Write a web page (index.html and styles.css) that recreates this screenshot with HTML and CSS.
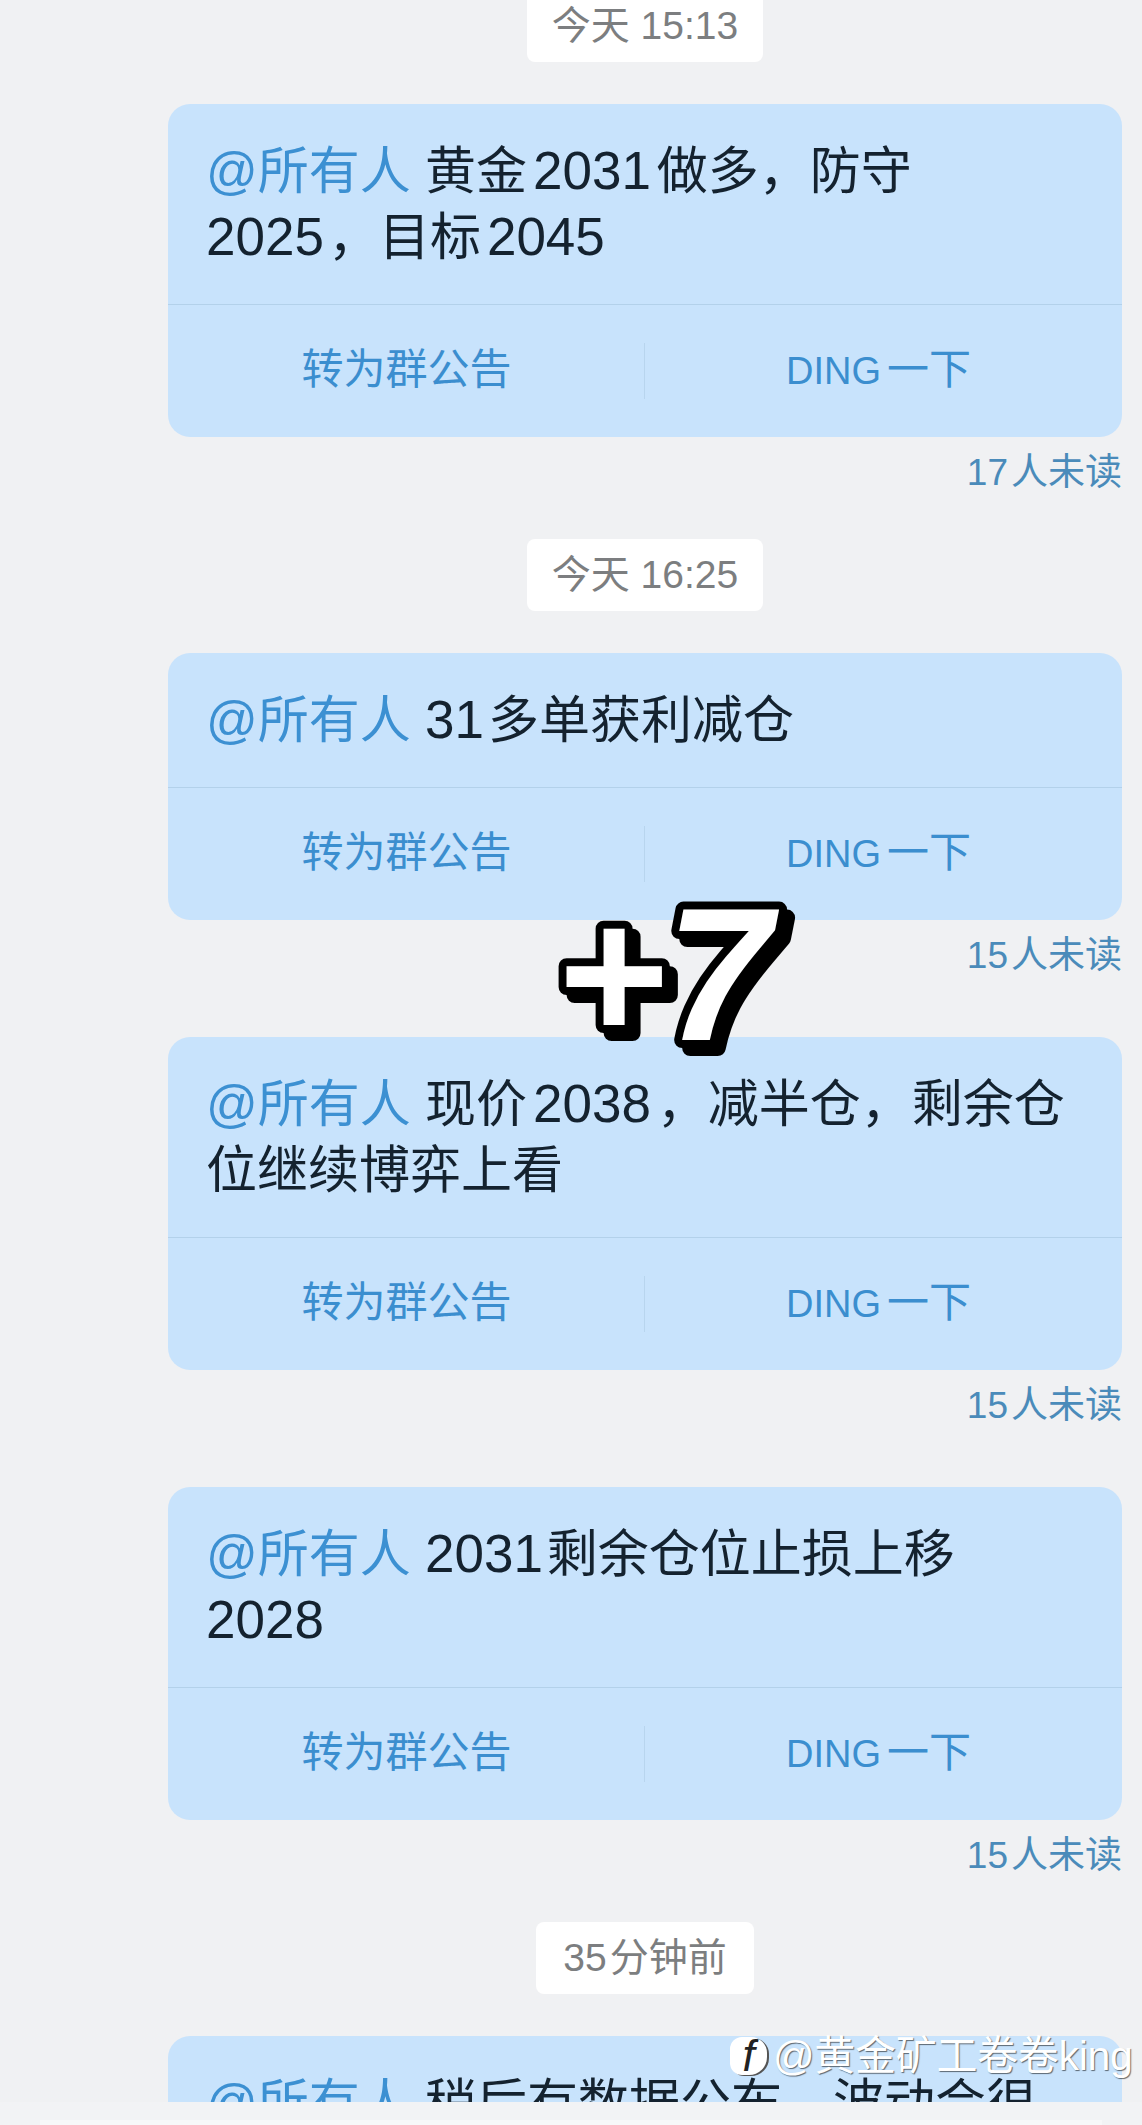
FILE: index.html
```html
<!DOCTYPE html>
<html lang="zh-CN">

<head>
    <meta charset="UTF-8">
    <meta name="viewport" content="width=device-width, initial-scale=1.0">
    <title>群消息</title>
    <link rel="stylesheet" href="styles.css">
</head>

<body>
    <div class="chat">
        <div class="time-row first"><span class="time">今天 15:13</span></div>

        <div class="msg">
            <div class="card">
                <p class="card-text"><span class="mention">@所有人</span> 黄金<span class="num">2031</span>做多，防守<br><span class="num-start">2025</span>，目标<span class="num">2045</span></p>
                <div class="actions">
                    <div class="action">转为群公告</div>
                    <div class="action-sep"></div>
                    <div class="action right"><span class="ding">DING</span>一下</div>
                </div>
            </div>
            <div class="unread">17<span class="one">人未读</span></div>
        </div>

        <div class="time-row"><span class="time">今天 16:25</span></div>

        <div class="msg">
            <div class="card">
                <p class="card-text"><span class="mention">@所有人</span> <span class="num-start">31</span>多单获利减仓</p>
                <div class="actions">
                    <div class="action">转为群公告</div>
                    <div class="action-sep"></div>
                    <div class="action right"><span class="ding">DING</span>一下</div>
                </div>
            </div>
            <div class="unread">15<span class="one">人未读</span></div>
        </div>

        <div class="msg next">
            <div class="card">
                <p class="card-text"><span class="mention">@所有人</span> 现价<span class="num">2038</span>，减半仓，剩余仓<br>位继续博弈上看</p>
                <div class="actions">
                    <div class="action">转为群公告</div>
                    <div class="action-sep"></div>
                    <div class="action right"><span class="ding">DING</span>一下</div>
                </div>
            </div>
            <div class="unread">15<span class="one">人未读</span></div>
        </div>

        <div class="msg next">
            <div class="card">
                <p class="card-text"><span class="mention">@所有人</span> <span class="num-start">2031</span>剩余仓位止损上移<br><span class="num-start">2028</span></p>
                <div class="actions">
                    <div class="action">转为群公告</div>
                    <div class="action-sep"></div>
                    <div class="action right"><span class="ding">DING</span>一下</div>
                </div>
            </div>
            <div class="unread">15<span class="one">人未读</span></div>
        </div>

        <div class="time-row"><span class="time short">35<span class="one">分钟前</span></span></div>

        <div class="msg">
            <div class="card">
                <p class="card-text"><span class="mention">@所有人</span> 稍后有数据公布，波动会很</p>
            </div>
        </div>
    </div>

    <div class="footer"><div class="footer-strip"></div></div>

    <svg class="sticker" width="270" height="200" viewBox="0 0 270 200">
        <text class="sticker-text" x="15" y="160">+7</text>
    </svg>

    <div class="watermark">
        <span class="wm-logo">f</span>
        <span class="wm-text">@黄金矿工卷卷king</span>
    </div>
</body>

</html>
```

FILE: styles.css
```css
* {
    box-sizing: border-box;
}

html,
body {
    margin: 0;
    padding: 0;
}

body {
    position: relative;
    height: 2125px;
    overflow: hidden;
    background-color: #f0f1f3;
    font-family: "Liberation Sans", "Noto Sans CJK SC", sans-serif;
}

.chat {
    height: 2102px;
    overflow: hidden;
    padding: 0 20px 0 168px;
}

.time-row {
    display: flex;
    justify-content: center;
    margin: 44px 0 42px;
}

.time-row.first {
    margin-top: -10px;
}

.time {
    height: 72px;
    line-height: 72px;
    padding: 0 25px;
    font-size: 39px;
    color: #7c7e80;
    background-color: white;
    border-radius: 8px;
}

.time.short {
    padding: 0 27px;
}

.msg.next {
    margin-top: 59px;
}

.card {
    background-color: #c8e3fc;
    border-radius: 22px;
}

.card-text {
    margin: 0;
    padding: 35px 30px 33px 38px;
    font-size: 51px;
    line-height: 66px;
    color: #14222f;
}

.mention {
    color: #3c90d2;
}

.num {
    margin: 0 6px;
    font-size: 53px;
    line-height: 1;
}

.num-start {
    margin-right: 4px;
    font-size: 53px;
    line-height: 1;
}

.actions {
    display: flex;
    align-items: center;
    height: 133px;
    padding-bottom: 12px;
    border-top: 1px solid #b3d1ea;
}

.action {
    flex: none;
    width: 50%;
    text-align: center;
    font-size: 42px;
    color: #3b8ecf;
}

.action.right {
    padding-right: 10px;
}

.ding {
    margin-right: 6px;
    font-size: 38px;
}

.action-sep {
    flex: none;
    width: 1px;
    height: 56px;
    margin-top: 12px;
    margin-left: -1px;
    background-color: #b8d5ee;
}

.one {
    margin-left: 3px;
}

.unread {
    height: 58px;
    padding-top: 14px;
    line-height: 44px;
    text-align: right;
    font-size: 37px;
    color: #4a8bba;
}

.footer {
    height: 23px;
    padding: 18px 40px 0;
    background-color: #f2f3f5;
}

.footer-strip {
    height: 5px;
    background-color: #f7f8f9;
}

.sticker {
    position: absolute;
    left: 540px;
    top: 880px;
    overflow: visible;
    filter: drop-shadow(8px 8px 0 black);
}

.sticker-text {
    font-size: 190px;
    font-weight: bold;
    font-style: italic;
    fill: white;
    stroke: black;
    stroke-width: 16px;
    stroke-linejoin: round;
    paint-order: stroke fill;
}

.watermark {
    position: absolute;
    left: 730px;
    top: 2034px;
    display: flex;
    align-items: center;
    gap: 6px;
    white-space: nowrap;
}

.wm-logo {
    display: flex;
    align-items: center;
    justify-content: center;
    width: 37px;
    height: 38px;
    font-size: 44px;
    font-style: italic;
    color: #222;
    background-color: white;
    border-radius: 12px 16px 18px 12px;
    box-shadow: 2px 1px 0 #555;
}

.wm-text {
    font-size: 41px;
    line-height: 44px;
    letter-spacing: -0.3px;
    color: white;
    text-shadow: 1px 1px 1px rgba(0, 0, 0, 0.55);
}
```
